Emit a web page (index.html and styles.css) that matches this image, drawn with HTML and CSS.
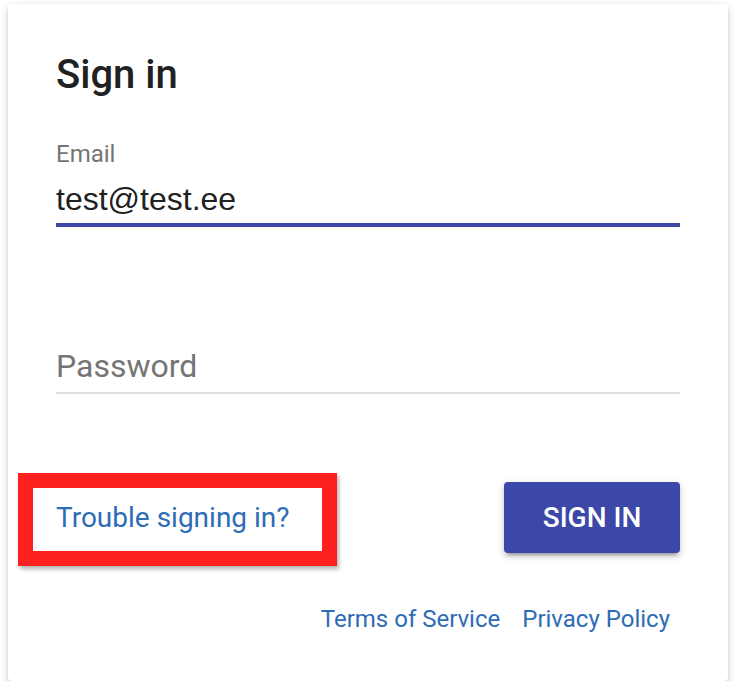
FILE: index.html
```html
<!DOCTYPE html>
<html>
<head>
<meta charset="utf-8">
<link rel="stylesheet" href="styles.css">
</head>
<body>
<div class="card">
  <h1 class="title">Sign in</h1>
  <div class="field">
    <div class="label">Email</div>
    <div class="value focused">test@test.ee</div>
  </div>
  <div class="field">
    <div class="placeholder">Password</div>
  </div>
  <div class="actions">
    <a class="trouble">Trouble signing in?<span class="annot"></span></a>
    <button class="btn">SIGN IN</button>
  </div>
  <div class="footer">
    <a class="flink">Terms of Service</a>
    <a class="flink">Privacy Policy</a>
  </div>
</div>
</body>
</html>
```
FILE: styles.css
```css
html, body {
  margin: 0;
  background: #ffffff;
}
body {
  padding: 4px 10px 0 8px;
  font-family: Roboto, "Liberation Sans", sans-serif;
}
.card {
  width: 720px;
  height: 677px;
  box-sizing: border-box;
  padding: 47px 48px 0 48px;
  background: #fff;
  border-radius: 4px;
  box-shadow: 0 4px 4px rgba(0,0,0,.14), 0 6px 2px -4px rgba(0,0,0,.2), 0 2px 10px rgba(0,0,0,.12);
}
.title {
  margin: 0;
  font-size: 40px;
  line-height: 48px;
  font-weight: 500;
  color: #212121;
}
.label {
  margin-top: 43px;
  font-size: 24px;
  line-height: 24px;
  color: #757575;
}
.value {
  margin-top: 13px;
  font-family: "Liberation Sans", Arial, sans-serif;
  font-size: 32px;
  line-height: 40px;
  color: #212121;
  padding-bottom: 4px;
  border-bottom: 4px solid #3b48a8;
}
.placeholder {
  margin-top: 119px;
  font-size: 32px;
  line-height: 40px;
  color: #757575;
  padding-bottom: 6px;
  border-bottom: 2px solid #e0e0e0;
}
.actions {
  margin-top: 88px;
  display: flex;
  justify-content: space-between;
  align-items: center;
}
.trouble {
  position: relative;
  font-size: 28px;
  line-height: 32px;
  color: #2e6cb5;
}
.annot {
  position: absolute;
  left: -38px;
  top: -29px;
  width: 319px;
  height: 93px;
  box-sizing: border-box;
  border: 15px solid #fc211f;
  box-shadow: 2px 3px 4px rgba(0,0,0,.3);
}
.btn {
  width: 176px;
  height: 71px;
  border: 0;
  border-radius: 4px;
  background: #3b48a8;
  color: #fff;
  font-family: Roboto, "Liberation Sans", sans-serif;
  font-size: 28px;
  font-weight: 500;
  box-shadow: 0 4px 4px rgba(0,0,0,.14), 0 6px 2px -4px rgba(0,0,0,.2), 0 2px 10px rgba(0,0,0,.12);
}
.footer {
  margin-top: 52px;
  display: flex;
  justify-content: flex-end;
  gap: 22px;
  padding-right: 10px;
}
.flink {
  font-size: 24px;
  line-height: 28px;
  color: #2e6cb5;
}
```
